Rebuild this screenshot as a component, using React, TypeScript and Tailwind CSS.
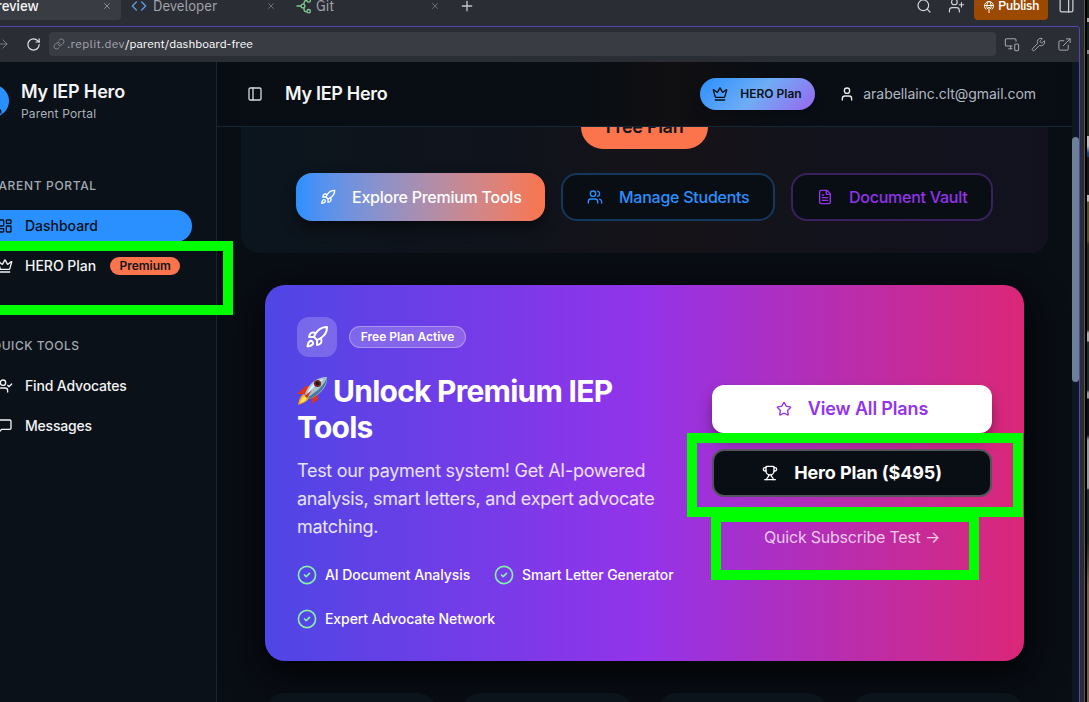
import React from "react";
import {
  ArrowRight, Code, Crown, ExternalLink, FileText, LayoutDashboard, Link, MonitorSmartphone,
  PanelLeft, PanelRight, Plus, Rocket, RotateCw, Search, Star, Trophy, User, UserCheck, UserPlus, Users, Wrench, X,
} from "lucide-react";

function GitTree() {
  return (
    <svg width="16" height="16" viewBox="0 0 16 16" fill="none" stroke="#7cc98f" strokeWidth="1.3" className="shrink-0">
      <path d="M.5 8h4.500M8 6.800V5a2.500 2.500 0 0 1 2.500-2.500H11M8 9.200v2a2.500 2.500 0 0 0 2.500 2.500H11" />
      <circle cx="7" cy="8" r="1.900" />
      <circle cx="12.700" cy="2.500" r="1.700" />
      <circle cx="12.700" cy="13.200" r="1.700" />
    </svg>
  );
}

function PublishGlobe() {
  return (
    <svg width="12" height="14" viewBox="0 0 12 14" fill="none" stroke="#fff" strokeWidth="1" className="shrink-0">
      <path d="M3.200 9.500A4.500 4.500 0 1 1 8.800 9.500M1.500 5.500h9M6 1C3.500 3.500 3.500 6.500 4.300 8.500M6 1C8.500 3.500 8.500 6.500 7.700 8.500M6 7v6M4 9l2-2 2 2" />
    </svg>
  );
}

function MessageBubble() {
  return (
    <svg width="16" height="16" viewBox="0 0 24 24" fill="none" stroke="currentColor" strokeWidth="2" strokeLinecap="round" strokeLinejoin="round" className="-ml-[3px] mr-3 shrink-0">
      <path d="M21 15a2 2 0 0 1-2 2H7l-4 4V5a2 2 0 0 1 2-2h14a2 2 0 0 1 2 2z" />
    </svg>
  );
}

function RocketEmoji() {
  return (
    <svg width="31" height="30" viewBox="0 0 31 30" className="shrink-0">
      <path d="M9 10 14 10 10 18 0 18Z" fill="#e63316" />
      <path d="m20 17 1 6-6 5 0-7Z" fill="#e63316" />
      <path d="M7 18c-3 1-5 5-6 11 5-2 9-3 11-7Z" fill="#f7a51c" />
      <path d="M7 20c-2 2-3 4-4 7 4-1 6-2 7-5Z" fill="#ffe45a" />
      <path d="M8 18C11 9 18 1 30 1c1 9-6 17-17 22Z" fill="#a7c2d2" />
      <path d="M13 23C23 18 30 10 30 1c-2 7-9 14-19 20Z" fill="#497b9c" />
      <path d="M11 15C15 8 20 4 26 3l-3 4c-5 2-8 6-12 11Z" fill="#e3eef3" />
      <circle cx="20.500" cy="7.500" r="3.600" fill="#7c2524" />
      <circle cx="20.500" cy="7.500" r="2" fill="#211a21" />
      <path d="m8 20 7-6-5 8Z" fill="#cf2815" />
    </svg>
  );
}

function CheckBadge() {
  return (
    <svg width="20" height="20" viewBox="0 0 24 24" fill="none" stroke="#86efac" strokeWidth="2" strokeLinecap="round" strokeLinejoin="round" className="shrink-0">
      <circle cx="12" cy="12" r="10.300" />
      <path d="m9 12 2 2 4-4" />
    </svg>
  );
}

function BrowserTabs() {
  return (
    <div className="flex h-[26px] items-start font-['IBM_Plex_Sans','Noto_Sans',sans-serif] text-sm text-[#a2a6ae]">
      <div className="flex h-5 w-[121px] items-center justify-between rounded-br bg-[#3a3c44] pr-[9px] text-[#f4f5f6]">
        <span className="-ml-[12px] -mt-[9px] font-medium tracking-[-0.1px]">Preview</span>
        <X size={10} strokeWidth={1.800} className="-mt-2 text-[#a2a6ae]" />
      </div>
      <div className="flex h-3 w-[164px] items-center pl-[10px]">
        <Code size={16} className="shrink-0 text-[#5e9bdb]" />
        <span className="ml-[6px]">Developer</span>
        <X size={10} className="ml-auto mr-[9px] text-[#777a82]" />
      </div>
      <div className="flex h-3 w-[164px] items-center pl-[11px]">
        <GitTree />
        <span className="ml-[4px]">Git</span>
        <X size={10} className="ml-auto mr-[9px] text-[#777a82]" />
      </div>
      <div className="flex h-3 items-center pl-[10px]"><Plus size={16} className="text-[#c2c5ca]" /></div>
      <div className="ml-auto flex items-start pr-[5px] text-[#d2d4d8]">
        <Search size={16} strokeWidth={1.800} className="-mt-[2px] mr-[16px]" />
        <UserPlus size={17} strokeWidth={1.600} className="-mt-[3px] mr-[9px]" />
        <div className="mr-[10px] flex h-5 w-[74px] items-start rounded-b bg-[#9c4900] pl-[9px] text-white">
          <PublishGlobe />
          <span className="-mt-[4px] ml-[3px] text-[13px] font-medium leading-5 tracking-[-0.5px]">Publish</span>
        </div>
        <PanelRight size={17} strokeWidth={1.700} className="-mt-[3px]" />
      </div>
    </div>
  );
}

function AddressBar() {
  return (
    <div className="flex h-[35px] shrink-0 items-center bg-[#2b2d35] pb-px text-[#a2a6ae]">
      <ArrowRight size={14} strokeWidth={1.700} className="-ml-1 shrink-0 text-[#7c8088]" />
      <RotateCw size={15} strokeWidth={1.900} className="ml-[16px] shrink-0 text-[#e2e4e7]" />
      <div className="ml-[8px] flex h-6 w-[947px] shrink-0 items-center rounded bg-[#3a3c44] pl-1 font-['IBM_Plex_Sans','Noto_Sans',sans-serif] text-xs">
        <Link size={12} strokeWidth={1.800} className="mr-[2px] text-[#8e929a]" />
        <span className="tracking-[0.35px]">.replit.dev</span><span className="text-white">/parent/dashboard-free</span>
      </div>
      <MonitorSmartphone size={16} strokeWidth={1.600} className="ml-[8px] shrink-0" />
      <Wrench size={15} strokeWidth={1.600} className="ml-[11px] shrink-0" />
      <ExternalLink size={15} strokeWidth={1.600} className="ml-[11px] shrink-0" />
    </div>
  );
}

function Sidebar() {
  return (
    <aside className="flex w-[217px] shrink-0 flex-col overflow-hidden border-r border-[#152736] bg-[#0a1118] text-[#f3f4f6]">
      <div className="flex h-[78px] items-center">
        <div className="-ml-[23px] flex size-8 shrink-0 items-center justify-end rounded-full bg-[#2a90ff]">
          <User size={15} className="mt-3 mr-[5px] text-[#07111b]" />
        </div>
        <div className="ml-3 mt-[2px]">
          <div className="text-lg font-semibold leading-6 tracking-[-0.15px]">My IEP Hero</div>
          <div className="text-xs leading-5 tracking-[0.15px] text-[#a9b0b9]">Parent Portal</div>
        </div>
      </div>
      <div className="-ml-[9px] mt-[36px] text-xs font-medium leading-5 tracking-[0.66px] text-[#a2a9b3]">PARENT PORTAL</div>
      <div className="mt-[14px] flex h-8 w-[192px] items-center rounded-r-2xl bg-[#2a90ff] text-sm font-[450] tracking-[-0.02px] text-[#07111b]">
        <LayoutDashboard size={16} className="-ml-[3px] mr-3" />Dashboard
      </div>
      <div className="mt-2 flex h-8 items-center text-sm font-[450] tracking-[-0.02px]">
        <Crown size={16} className="-ml-[3px] mr-3" />HERO Plan
        <span className="ml-[14px] flex h-[18px] w-[70px] items-center justify-center rounded-full bg-[#fb744b] text-xs font-semibold tracking-normal text-[#10151b]">Premium</span>
      </div>
      <div className="-ml-[8px] mt-[54px] text-xs font-medium leading-5 tracking-[0.5px] text-[#a2a9b3]">QUICK TOOLS</div>
      <div className="mt-[14px] flex h-8 items-center text-sm font-[450] tracking-[-0.16px]">
        <UserCheck size={16} className="-ml-[3px] mr-3" />Find Advocates
      </div>
      <div className="mt-2 flex h-8 items-center text-sm font-[450] tracking-[-0.2px]">
        <MessageBubble />Messages
      </div>
    </aside>
  );
}

function AppHeader() {
  return (
    <header className="flex h-[65px] shrink-0 items-center border-b border-[#152736] bg-[linear-gradient(90deg,#080d13,#080e14_40%,#100f12_53%,#080e14_68%,#080d14)] pl-[30px] pr-[36px]">
      <PanelLeft size={16} className="text-[#d5d8db]" />
      <span className="ml-[22px] text-lg font-semibold tracking-[-0.3px] text-[#f5f6f7]">My IEP Hero</span>
      <div className="ml-auto flex h-8 w-[115px] items-center rounded-2xl bg-[linear-gradient(135deg,#2a90ff,#6fadf5_50%,#9966ef)] pl-3 text-xs font-semibold text-[#0a1118] shadow-lg">
        <Crown size={16} className="mr-3" />HERO Plan
      </div>
      <User size={16} className="ml-[24px] text-[#e7e9eb]" />
      <span className="ml-2 text-sm tracking-[-0.05px] text-[#b2b9c1]">arabellainc.clt@gmail.com</span>
    </header>
  );
}

function Welcome() {
  return (
    <section className="mx-6 flex h-[126px] shrink-0 flex-col items-center rounded-b-[18px] bg-[linear-gradient(90deg,#0b151d,#0f131c_30%,#161318_55%,#12131c_72%,#12121f)]">
      <div className="-mt-[22px] flex h-11 w-[127px] shrink-0 items-center justify-center rounded-[22px] bg-[#fb744b] text-lg font-semibold tracking-[-0.3px] text-[#11151b] [clip-path:inset(22px_0_0_0)]">Free Plan</div>
      <div className="mt-6 flex gap-4">
        <div className="flex h-12 w-[249px] items-center rounded-2xl bg-linear-to-r from-[#2a90ff] to-[#fb744b] pl-6 text-base font-[450] tracking-[-0.25px] text-white shadow-[0_8px_16px_-4px_#000a]">
          <Rocket size={16} className="mr-4" />Explore Premium Tools
        </div>
        <div className="flex h-12 w-[214px] items-center rounded-2xl border-2 border-[#14375c] bg-[#090e15] pl-6 text-base font-[450] tracking-[-0.25px] text-[#2a90ff]">
          <Users size={16} className="mr-4" />Manage Students
        </div>
        <div className="flex h-12 w-[202px] items-center rounded-2xl border-2 border-[#3a215c] bg-[#090e15] pl-6 text-base font-[450] tracking-[-0.25px] text-[#9333ea]">
          <FileText size={16} className="mr-4" />Document Vault
        </div>
      </div>
    </section>
  );
}

function Feature({ children }: { children: React.ReactNode }) {
  return <div className="flex h-5 items-center gap-2 whitespace-nowrap text-sm font-[450] tracking-[-0.08px] text-white"><CheckBadge />{children}</div>;
}

function Upgrade() {
  return (
    <section className="mx-12 mt-8 flex h-[376px] w-[759px] shrink-0 items-center rounded-[20px] bg-[linear-gradient(90deg,#4f46e5,#9333ea_50%,#db2777)] px-8 shadow-[0_12px_36px_6px_#000000b0]">
      <div className="h-[312px] w-[391px]">
        <div className="flex items-center gap-3">
          <div className="flex size-10 items-center justify-center rounded-xl bg-white/20"><Rocket size={24} className="text-white" /></div>
          <span className="flex h-[22px] w-[117px] items-center justify-center rounded-full border border-white/30 bg-white/20 text-xs font-semibold text-white">Free Plan Active</span>
        </div>
        <h2 className="mt-4 text-[30px] font-bold leading-9 tracking-[-0.75px] text-white">
          <span className="flex items-center gap-[5px]"><RocketEmoji />Unlock Premium IEP</span>
          <span className="block">Tools</span>
        </h2>
        <p className="mt-3 w-[375px] text-lg leading-7 tracking-[-0.29px] text-white/85">Test our payment system! Get AI-powered analysis, smart letters, and expert advocate matching.</p>
        <div className="mt-6 flex flex-wrap gap-x-6 gap-y-6">
          <Feature>AI Document Analysis</Feature>
          <Feature>Smart Letter Generator</Feature>
          <Feature>Expert Advocate Network</Feature>
        </div>
      </div>
      <div className="ml-6 flex w-[280px] flex-col gap-4">
        <div className="flex h-12 items-center justify-center rounded-xl bg-white text-lg font-semibold tracking-[-0.15px] text-[#9333ea] shadow-[0_8px_16px_-4px_#000a]">
          <Star size={16} className="mr-4" />View All Plans
        </div>
        <div className="flex h-12 items-center justify-center rounded-xl border-2 border-[#55535c] bg-[#090e15] text-lg font-bold tracking-[-0.12px] text-white">
          <Trophy size={16} className="mr-4" />Hero Plan ($495)
        </div>
        <div className="flex h-12 items-center justify-center text-base tracking-[-0.22px] text-white/75">Quick Subscribe Test →</div>
      </div>
    </section>
  );
}

export default function App() {
  return (
    <div className="relative flex h-[702px] w-[1089px] overflow-hidden bg-[#2b2d35] font-['Inter',sans-serif]">
      <div className="flex w-[1080px] shrink-0 flex-col">
        <BrowserTabs />
        <div className="flex min-h-0 flex-1 flex-col overflow-hidden rounded-tr border-t border-r border-[#5345b4]">
          <AddressBar />
          <div className="flex min-h-0 flex-1">
            <Sidebar />
            <div className="flex min-w-0 flex-1 flex-col overflow-hidden bg-[#090d14]">
              <AppHeader />
              <main className="flex min-h-0 flex-1 flex-col overflow-hidden">
                <Welcome />
                <Upgrade />
                <div className="mx-12 mt-8 grid w-[759px] shrink-0 grid-cols-4 gap-6">
                  {[0, 1, 2, 3].map((n) => <div key={n} className="h-24 rounded-[20px] bg-[#0b131b]" />)}
                </div>
              </main>
            </div>
            <div className="w-[7px] shrink-0 bg-[#0d1822] pt-[75px]"><div className="h-[245px] rounded-full bg-[#6c8096]" /></div>
          </div>
        </div>
      </div>
      <div className="w-[5px] border-r border-[#575757] bg-[#2a2c32]" />
      <div className="w-[2px] bg-black" />
      <div className="flex-1 bg-[linear-gradient(#152015_0_18px,#aaa_18px_22px,#172016_22px_50px,#888_50px_54px,#23291a_54px_136px,#bbb_136px_146px,#174477_153px_156px,#171918_158px_195px,#bbb_195px_201px,#545126_202px_240px,#28281c_245px_330px,#aaa_333px_341px,#202b28_342px_390px,#999_393px_398px,#111_399px_435px,#999_440px_488px,#232820_490px_540px,#765f4b_585px_702px)]" />
      <div className="absolute -left-3 top-[241px] h-[74px] w-[245px] border-[10px] border-[#00ff00]" />
      <div className="absolute left-[711px] top-[512px] h-[68px] w-[268px] border-[10px] border-[#00ff00]" />
      <div className="absolute left-[687px] top-[433px] h-[84px] w-[336px] border-[10px] border-[#00ff00]" />
    </div>
  );
}
